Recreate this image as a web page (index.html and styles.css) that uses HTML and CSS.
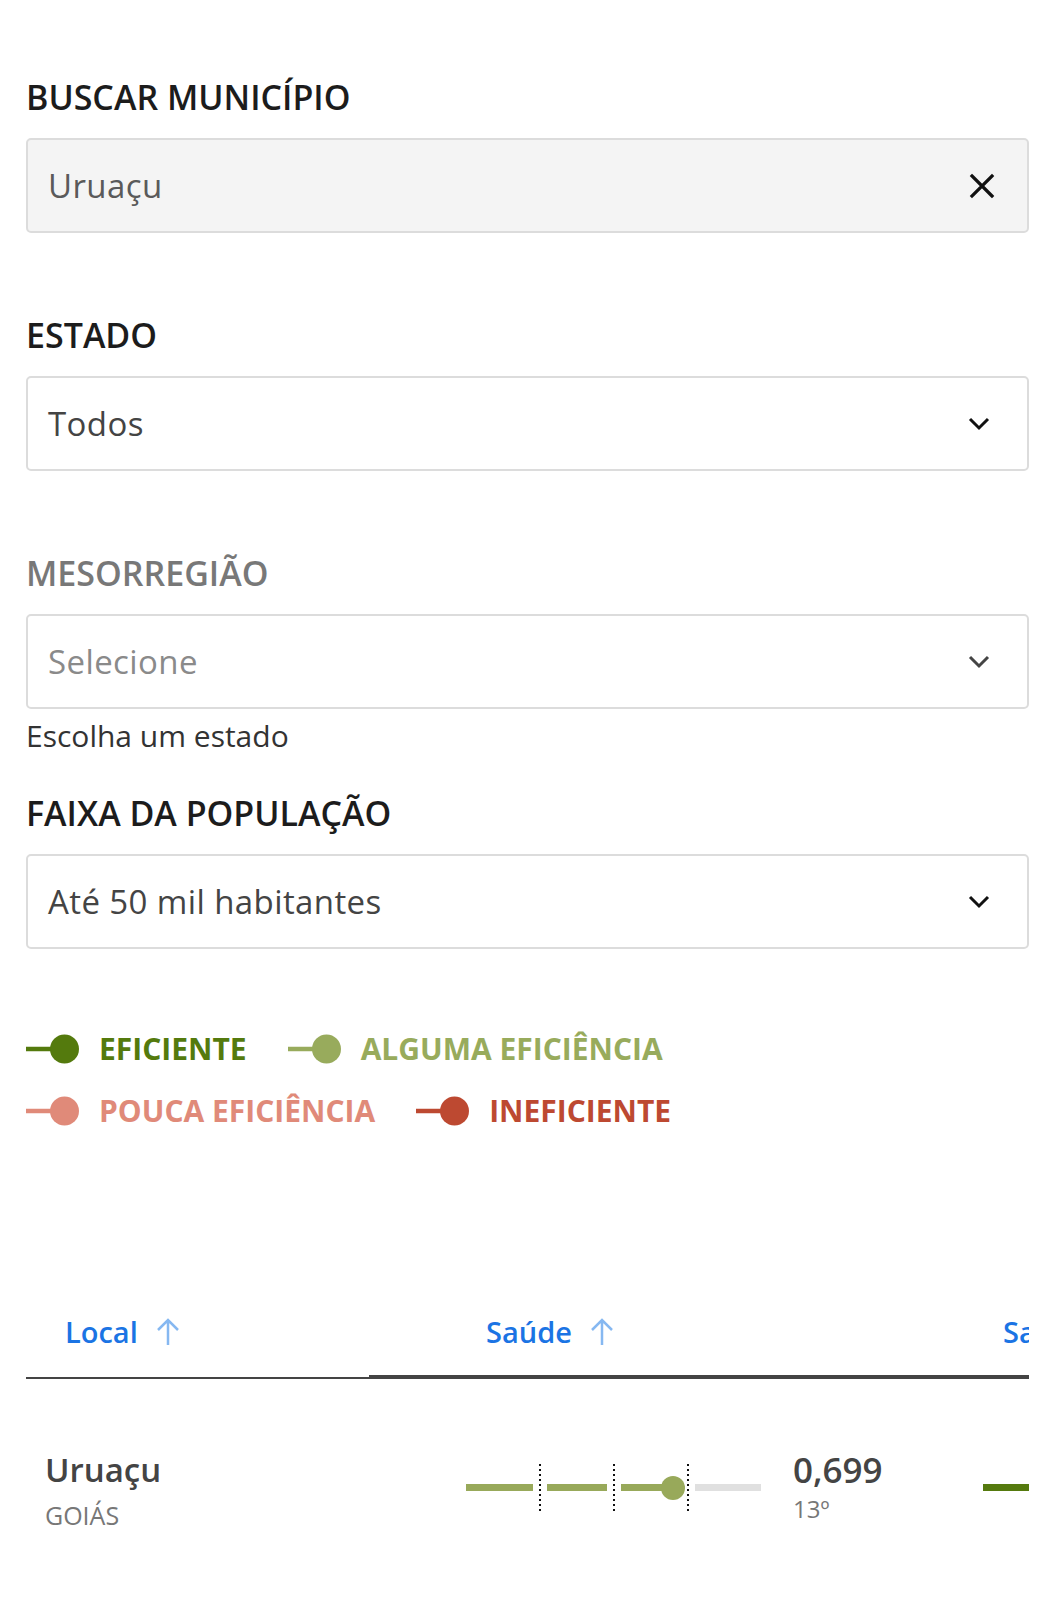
FILE: index.html
```html
<!DOCTYPE html>
<html lang="pt-BR">
<head>
<meta charset="utf-8">
<title>Buscar município</title>
<link rel="stylesheet" href="styles.css">
</head>
<body>
<main class="page">
  <section class="field">
    <div class="label">BUSCAR MUNICÍPIO</div>
    <div class="box box--search">
      <span class="value value--search">Uruaçu</span>
      <svg class="icon" width="30" height="30" viewBox="0 0 30 30"><path d="M5 5 L25 25 M25 5 L5 25" stroke="#111" stroke-width="3.2" fill="none" stroke-linecap="square"/></svg>
    </div>
  </section>

  <section class="field">
    <div class="label">ESTADO</div>
    <div class="box">
      <span class="value">Todos</span>
      <svg class="icon" width="30" height="30" viewBox="0 0 30 30"><path d="M3 10 L12 19 L21 10" stroke="#111" stroke-width="3" fill="none"/></svg>
    </div>
  </section>

  <section class="field field--hint">
    <div class="label label--muted">MESORREGIÃO</div>
    <div class="box">
      <span class="value value--placeholder">Selecione</span>
      <svg class="icon" width="30" height="30" viewBox="0 0 30 30"><path d="M3 10 L12 19 L21 10" stroke="#444" stroke-width="3" fill="none"/></svg>
    </div>
    <div class="hint">Escolha um estado</div>
  </section>

  <section class="field field--last">
    <div class="label">FAIXA DA POPULAÇÃO</div>
    <div class="box">
      <span class="value">Até 50 mil habitantes</span>
      <svg class="icon" width="30" height="30" viewBox="0 0 30 30"><path d="M3 10 L12 19 L21 10" stroke="#111" stroke-width="3" fill="none"/></svg>
    </div>
  </section>

  <section class="legend">
    <div class="legend-row">
      <div class="legend-item item--ef">
        <svg width="53" height="30" viewBox="0 0 53 30"><line x1="0" y1="15" x2="30" y2="15" stroke="currentColor" stroke-width="4.5"/><circle cx="38.5" cy="15" r="14.5" fill="currentColor"/></svg>
        <span>EFICIENTE</span>
      </div>
      <div class="legend-item item--alg">
        <svg width="53" height="30" viewBox="0 0 53 30"><line x1="0" y1="15" x2="30" y2="15" stroke="currentColor" stroke-width="4.5"/><circle cx="38.5" cy="15" r="14.5" fill="currentColor"/></svg>
        <span>ALGUMA EFICIÊNCIA</span>
      </div>
    </div>
    <div class="legend-row">
      <div class="legend-item item--pouca">
        <svg width="53" height="30" viewBox="0 0 53 30"><line x1="0" y1="15" x2="30" y2="15" stroke="currentColor" stroke-width="4.5"/><circle cx="38.5" cy="15" r="14.5" fill="currentColor"/></svg>
        <span>POUCA EFICIÊNCIA</span>
      </div>
      <div class="legend-item item--inef">
        <svg width="53" height="30" viewBox="0 0 53 30"><line x1="0" y1="15" x2="30" y2="15" stroke="currentColor" stroke-width="4.5"/><circle cx="38.5" cy="15" r="14.5" fill="currentColor"/></svg>
        <span>INEFICIENTE</span>
      </div>
    </div>
  </section>

  <section class="table">
    <div class="table-inner">
      <div class="thead">
        <div class="th th--local">Local <svg class="sort" width="26" height="30" viewBox="0 0 26 30"><path d="M13 28 L13 3 M3 13 L13 3 L23 13" stroke="#86b8f1" stroke-width="2.5" fill="none"/></svg></div>
        <div class="th th--active th--col">Saúde <svg class="sort" width="26" height="30" viewBox="0 0 26 30"><path d="M13 28 L13 3 M3 13 L13 3 L23 13" stroke="#86b8f1" stroke-width="2.5" fill="none"/></svg></div>
        <div class="th th--active th--col">Saneamento <svg class="sort" width="26" height="30" viewBox="0 0 26 30"><path d="M13 28 L13 3 M3 13 L13 3 L23 13" stroke="#86b8f1" stroke-width="2.5" fill="none"/></svg></div>
      </div>
      <div class="tr">
        <div class="td td--local">
          <div class="city">Uruaçu</div>
          <div class="state">GOIÁS</div>
        </div>
        <div class="td td--col">
          <div class="chart">
            <div class="seg seg--1 seg--on"></div>
            <div class="sep"></div>
            <div class="seg seg--2 seg--on"></div>
            <div class="sep"></div>
            <div class="seg seg--3 seg--on"><span class="knob"></span></div>
            <div class="sep"></div>
            <div class="seg seg--4"></div>
          </div>
          <div class="score">
            <div class="score-val">0,699</div>
            <div class="score-rank">13º</div>
          </div>
        </div>
        <div class="td td--col">
          <div class="chart">
            <div class="seg seg--1 seg--dark"></div>
            <div class="sep"></div>
            <div class="seg seg--2 seg--dark"></div>
          </div>
        </div>
      </div>
    </div>
  </section>
</main>
</body>
</html>
```

FILE: styles.css
```css
* { box-sizing: border-box; }
html, body { margin: 0; padding: 0; background: #fff; }
body {
  font-family: "Open Sans", "Noto Sans", "DejaVu Sans", sans-serif;
  color: #1c1c1c;
}
.page {
  padding: 75px 25px 0 26px;
}
.field { margin-bottom: 80px; }
.field--hint { margin-bottom: 37px; }
.field--last { margin-bottom: 80px; }
.label {
  font-size: 34px;
  line-height: 40px;
  font-weight: 600;
  color: #1c1c1c;
  padding-top: 2px;
  margin-bottom: 21px;
}
.label--muted { color: #787878; }
.box {
  height: 95px;
  border: 2px solid #dcdcdc;
  border-radius: 5px;
  background: #fff;
  display: flex;
  align-items: center;
  justify-content: space-between;
  padding: 0 30px 0 20px;
}
.box--search { background: #f4f4f4; }
.value {
  font-size: 33px;
  line-height: 40px;
  letter-spacing: 0.4px;
  color: #444;
}
.value--search { color: #5a5a5a; }
.value--placeholder { color: #8a8a8a; }
.icon { display: block; }
.hint {
  margin-top: 9px;
  font-size: 30px;
  line-height: 36px;
  color: #333;
}

.legend { display: flex; flex-direction: column; gap: 22px; }
.legend-row { display: flex; gap: 41px; height: 40px; align-items: center; }
.legend-item {
  display: flex;
  align-items: center;
  gap: 20px;
  font-size: 30px;
  line-height: 40px;
  font-weight: 700;
}
.legend-item svg { display: block; }
.item--ef { color: #547a0d; }
.item--alg { color: #98ab5c; }
.item--pouca { color: #e08a79; }
.item--inef { color: #bd4931; }

.table {
  margin-top: 181px;
  width: 1003px;
  overflow: hidden;
}
.table-inner { width: 1400px; }
.thead { display: flex; align-items: flex-end; }
.th {
  display: flex;
  align-items: center;
  gap: 17px;
  font-size: 29px;
  line-height: 40px;
  font-weight: 600;
  color: #1b74e4;
  padding-bottom: 25px;
  white-space: nowrap;
}
.th .sort { display: block; }
.th--local {
  width: 343px;
  padding-left: 39px;
  border-bottom: 2px solid #444;
}
.th--col {
  width: 517px;
  padding-left: 117px;
}
.th--active { border-bottom: 4px solid #444; padding-bottom: 23px; }

.tr { display: flex; padding-top: 69px; }
.td--local { width: 343px; padding-left: 19px; }
.td--col { width: 517px; padding-left: 97px; display: flex; align-items: flex-start; }
.city {
  font-size: 33px;
  line-height: 44px;
  font-weight: 600;
  color: #444;
}
.state {
  font-size: 25px;
  line-height: 46px;
  color: #777;
}
.chart {
  display: flex;
  align-items: center;
  height: 47px;
  margin-top: 16px;
}
.seg { height: 7px; background: #e0e0e0; position: relative; }
.seg--1 { width: 67px; }
.seg--2 { width: 60px; }
.seg--3 { width: 60px; }
.seg--4 { width: 66px; }
.seg--on { background: #98a95a; }
.seg--dark { background: #557a0e; }
.knob {
  position: absolute;
  left: 40px;
  top: -8.5px;
  width: 24px;
  height: 24px;
  border-radius: 50%;
  background: #98a95a;
}
.sep {
  width: 14px;
  height: 47px;
  display: flex;
  justify-content: center;
}
.sep::before {
  content: "";
  display: block;
  width: 2px;
  height: 100%;
  background: repeating-linear-gradient(to bottom, #111 0 2px, transparent 2px 5px);
}
.score { margin-left: 32px; }
.score-val {
  font-size: 35px;
  line-height: 44px;
  font-weight: 600;
  color: #444;
}
.score-rank {
  font-size: 24px;
  line-height: 34px;
  color: #777;
}
```
